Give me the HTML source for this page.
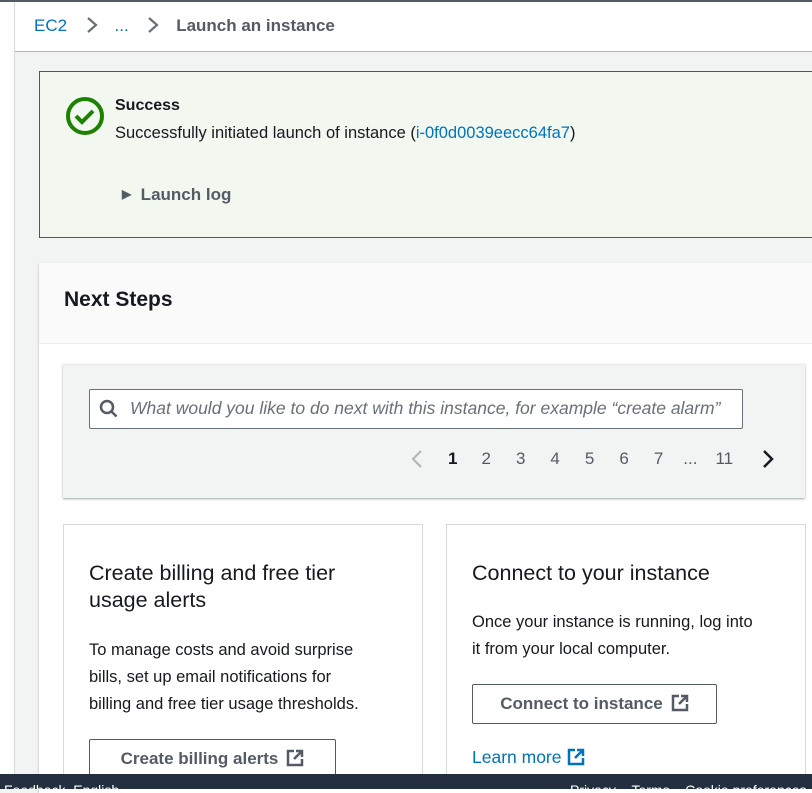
<!DOCTYPE html>
<html><head><style>
body{margin:0;width:812px;height:789px;overflow:hidden;font-family:"Liberation Sans",sans-serif;background:#f2f3f3;position:relative;color:#16191f}
.a{position:absolute}
.lnk{color:#0073bb}
.ext{display:inline-block;vertical-align:-3px;margin-left:8px}
</style></head><body>
<div class="a" style="left:0;top:0;width:812px;height:2px;background:#545b64"></div>
<div class="a" style="left:0;top:2px;width:14px;height:787px;background:#fff;border-right:1px solid #d5dbdb"></div>
<div class="a" style="left:15px;top:2px;width:797px;height:49px;background:#fff;border-bottom:1px solid #aab7b8"></div>
<div class="a" style="left:34px;top:15px;font-size:17px;white-space:nowrap">
<span class="lnk">EC2</span>
<svg width="16" height="20" style="margin:0 10px 0 12px;vertical-align:-4px"><path d="M4 3l8 7-8 7" stroke="#687078" stroke-width="2.2" fill="none"/></svg>
<span class="lnk">...</span>
<svg width="16" height="20" style="margin:0 10px 0 12px;vertical-align:-4px"><path d="M4 3l8 7-8 7" stroke="#687078" stroke-width="2.2" fill="none"/></svg>
<b style="color:#545b64">Launch an instance</b></div>

<div class="a" style="left:39px;top:71px;width:790px;height:165px;background:#f2f8f0;border:1px solid #1d8102"></div>
<svg class="a" style="left:65px;top:96px" width="40" height="40"><circle cx="20" cy="20" r="17" stroke="#1d8102" stroke-width="4" fill="none"/><path d="M11 20l6 6 11-11" stroke="#1d8102" stroke-width="4" fill="none"/></svg>
<div class="a" style="left:115px;top:97px;font-size:16px;font-weight:bold">Success</div>
<div class="a" style="left:115px;top:124px;font-size:16.5px;white-space:nowrap">Successfully initiated launch of instance (<span class="lnk">i-0f0d0039eecc64fa7</span>)</div>
<div class="a" style="left:122px;top:185px;font-size:17px;font-weight:bold;color:#545b64"><span style="font-size:12px;vertical-align:2px">&#9654;</span>&nbsp; Launch log</div>

<div class="a" style="left:39px;top:263px;width:790px;height:530px;background:#fff;box-shadow:0 1px 2px rgba(0,28,36,.3)"></div>
<div class="a" style="left:39px;top:263px;width:790px;height:80px;background:#fafafa;border-bottom:1px solid #eaeded"></div>
<div class="a" style="left:64px;top:288px;font-size:21px;font-weight:bold">Next Steps</div>

<div class="a" style="left:63px;top:364px;width:742px;height:133px;background:#f2f3f3;box-shadow:0 1px 2px rgba(0,28,36,.4);border-top:1px solid #eaeded"></div>
<div class="a" style="left:89px;top:389px;width:652px;height:38px;background:#fff;border:1px solid #687078;border-radius:2px"></div>
<svg class="a" style="left:99px;top:399px" width="20" height="20"><circle cx="8" cy="8" r="6" stroke="#545b64" stroke-width="2.5" fill="none"/><path d="M12.5 12.5l5 5" stroke="#545b64" stroke-width="2.5"/></svg>
<div class="a" style="left:130px;top:398px;font-size:17.5px;font-style:italic;color:#687078;white-space:nowrap">What would you like to do next with this instance, for example “create alarm”</div>
<svg class="a" style="left:410px;top:449px" width="14" height="20"><path d="M11 2l-8 8 8 8" stroke="#aab7b8" stroke-width="2" fill="none"/></svg>
<div class="a" style="left:448px;top:449px;font-size:17px;color:#545b64;white-space:nowrap"><b style="color:#16191f">1</b><span style="margin-left:24px">2</span><span style="margin-left:25px">3</span><span style="margin-left:25px">4</span><span style="margin-left:25px">5</span><span style="margin-left:25px">6</span><span style="margin-left:25px">7</span><span style="margin-left:20px">...</span><span style="margin-left:18px">11</span></div>
<svg class="a" style="left:761px;top:449px" width="14" height="20"><path d="M3 2l8 8-8 8" stroke="#16191f" stroke-width="2.5" fill="none"/></svg>

<div class="a" style="left:63px;top:524px;width:358px;height:260px;background:#fff;border:1px solid #d5dbdb"></div>
<div class="a" style="left:446px;top:524px;width:358px;height:260px;background:#fff;border:1px solid #d5dbdb"></div>
<div class="a" style="left:89px;top:560px;font-size:21.5px;line-height:27px;width:285px">Create billing and free tier usage alerts</div>
<div class="a" style="left:89px;top:637px;font-size:16.5px;line-height:27px;white-space:nowrap">To manage costs and avoid surprise<br>bills, set up email notifications for<br>billing and free tier usage thresholds.</div>
<div class="a" style="left:89px;top:739px;width:245px;height:38px;border:1px solid #545b64;border-radius:2px;font-size:17px;font-weight:bold;color:#545b64;text-align:center;line-height:38px">Create billing alerts<svg class="ext" width="18" height="18"><path d="M8 2H2v14h14v-6M10 2h6v6M16 2L8 10" stroke="#545b64" stroke-width="2.5" fill="none"/></svg></div>
<div class="a" style="left:472px;top:560px;font-size:21.5px;line-height:27px;white-space:nowrap">Connect to your instance</div>
<div class="a" style="left:472px;top:609px;font-size:16.5px;line-height:27px;white-space:nowrap">Once your instance is running, log into<br>it from your local computer.</div>
<div class="a" style="left:472px;top:684px;width:243px;height:38px;border:1px solid #545b64;border-radius:2px;font-size:17px;font-weight:bold;color:#545b64;text-align:center;line-height:38px">Connect to instance<svg class="ext" width="18" height="18"><path d="M8 2H2v14h14v-6M10 2h6v6M16 2L8 10" stroke="#545b64" stroke-width="2.5" fill="none"/></svg></div>
<div class="a lnk" style="left:472px;top:747px;font-size:17.5px">Learn more<svg class="ext" style="margin-left:5px" width="18" height="18"><path d="M8 2H2v14h14v-6M10 2h6v6M16 2L8 10" stroke="#0073bb" stroke-width="2.5" fill="none"/></svg></div>

<div class="a" style="left:0;top:774px;width:812px;height:15px;background:#232f3e;color:#fff;font-size:14px;overflow:hidden"><span class="a" style="left:4px;top:8px">Feedback &nbsp;English</span><span class="a" style="left:570px;top:8px;white-space:nowrap">Privacy &nbsp;&nbsp;&nbsp;Terms &nbsp;&nbsp;&nbsp;Cookie preferences</span></div>
</body></html>
